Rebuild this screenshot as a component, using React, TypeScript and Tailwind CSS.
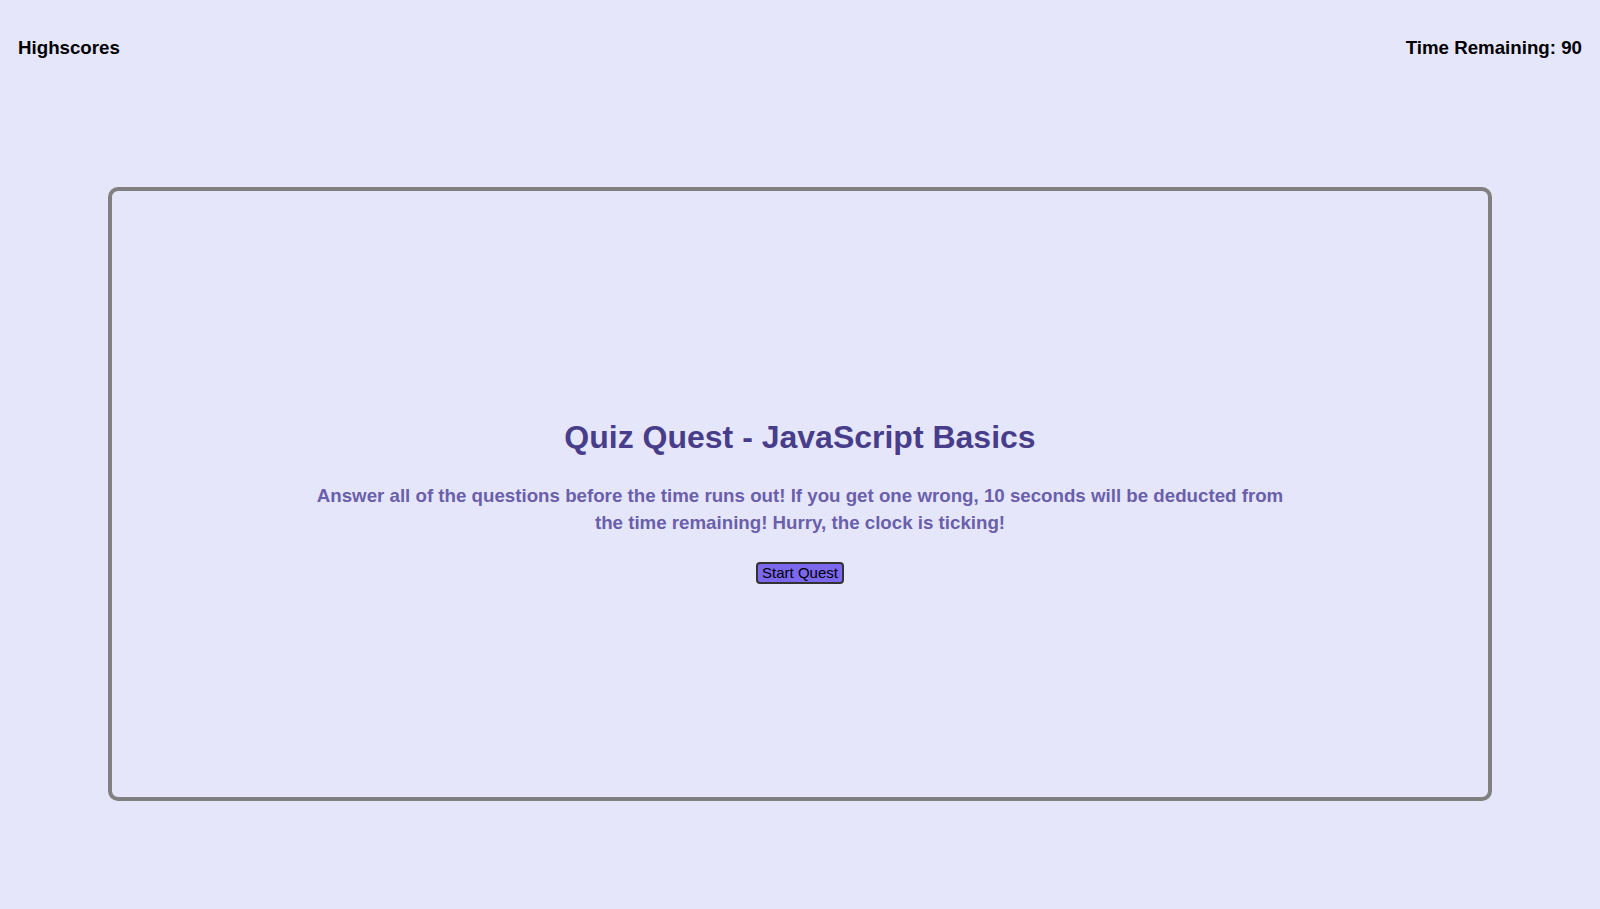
import React from 'react';

const App: React.FC = () => {
  return (
    <div className="min-h-screen bg-[#e6e6fa] font-['Liberation_Sans',Arial,sans-serif] flex flex-col">
      {/* Header */}
      <header className="flex justify-between items-start px-[18px] pt-[34px]">
        <h3 className="text-[18.72px] font-bold text-black leading-normal">Highscores</h3>
        <h3 className="text-[18.72px] font-bold text-black leading-normal">Time Remaining: 90</h3>
      </header>

      {/* Quiz card */}
      <main className="mx-[108px] mt-[125px] h-[614px] border-4 border-[#808080] rounded-[10px] flex flex-col items-center justify-center pt-[8px]">
        <h1 className="text-[32px] font-bold text-[#483d8b] leading-normal">Quiz Quest - JavaScript Basics</h1>
        <h3 className="mt-[21px] max-w-[985px] text-center text-[18.72px] font-bold text-[#6a5fab] leading-[27px]">
          Answer all of the questions before the time runs out! If you get one wrong, 10 seconds will be deducted from the time remaining! Hurry, the clock is ticking!
        </h3>
        <button className="mt-[26px] h-[22px] px-[4px] bg-[#7b68ee] border-2 border-[#333333] rounded-[4px] text-[15px] leading-none text-black">
          Start Quest
        </button>
      </main>
    </div>
  );
};

export default App;
